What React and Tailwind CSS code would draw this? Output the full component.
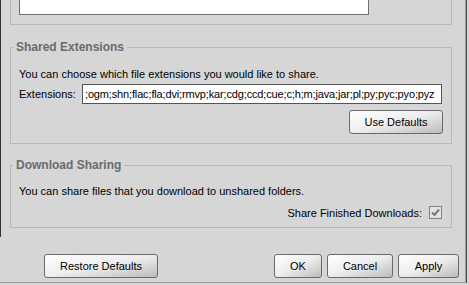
import React from "react";

const btn =
  "h-[24px] rounded-[3px] border border-[#6a6a6a] bg-linear-to-br from-white via-[#ededed] to-[#bcbcbc] text-[11px] leading-none text-black";

function Group({ title, className = "", children }) {
  return (
    <fieldset className={"ml-[9px] w-[442px] border border-[#b9b9b9] px-[8px] " + className}>
      <legend className="-ml-[6px] px-[3px] text-[12px] font-bold leading-[14px] text-[#6b6b6b]">
        {title}
      </legend>
      {children}
    </fieldset>
  );
}

export default function App() {
  return (
    <div className="h-[285px] w-[469px] bg-[#d6d6d6] font-['Liberation_Sans',Arial,sans-serif] text-[11px] text-black">
      <div className="w-[467px] border-r border-[#4a4a4a]">
        <div className="w-[466px] border-r border-b border-[#9c9c9c]">
          {/* settings panel */}
          <div className="h-[237px] border-l border-[#333]">
            {/* cut off group with text area */}
            <div className="ml-[9px] h-[25px] w-[442px] border-x border-b border-[#b9b9b9] pl-[8px]">
              <div className="h-[15px] w-[350px] border-x border-b border-[#6f6f6f] bg-white" />
            </div>

            <Group title="Shared Extensions" className="mt-[15px] pb-[9px]">
              <p className="mt-[13px] leading-[14px]">
                You can choose which file extensions you would like to share.
              </p>
              <div className="mt-[3px] flex items-center">
                <span className="w-[63px] leading-[14px]">Extensions:</span>
                <div className="flex h-[20px] w-[360px] items-center overflow-hidden border border-[#555] bg-white px-[2px] text-[11px] tracking-[-0.15px] whitespace-nowrap">
                  ;ogm;shn;flac;fla;dvi;rmvp;kar;cdg;ccd;cue;c;h;m;java;jar;pl;py;pyc;pyo;pyz
                </div>
              </div>
              <div className="mt-[6px] flex justify-end">
                <button className={btn + " h-[23px] w-[94px]"}>Use Defaults</button>
              </div>
            </Group>

            <Group title="Download Sharing" className="mt-[14px] pb-[8px]">
              <p className="mt-[12px] leading-[14px]">
                You can share files that you download to unshared folders.
              </p>
              <div className="mt-[8px] flex h-[13px] items-center justify-end gap-[7px] pr-[1px]">
                <span className="leading-[14px]">Share Finished Downloads:</span>
                <span className="flex h-[13px] w-[13px] items-center justify-center border border-[#808080] bg-[#e4e4e4]">
                  <svg width="9" height="9" viewBox="0 0 9 9">
                    <path d="M1 4.5 L3.5 7 L8 1.5" fill="none" stroke="#7a7a7a" strokeWidth="2" />
                  </svg>
                </span>
              </div>
            </Group>
          </div>

          {/* dialog buttons */}
          <div className="mt-[17px] flex pb-[4px] pl-[44px] pr-[6px]">
            <button className={btn + " w-[114px]"}>Restore Defaults</button>
            <div className="ml-auto flex gap-[5px]">
              <button className={btn + " w-[48px]"}>OK</button>
              <button className={btn + " w-[66px]"}>Cancel</button>
              <button className={btn + " w-[61px]"}>Apply</button>
            </div>
          </div>
        </div>
      </div>
    </div>
  );
}
